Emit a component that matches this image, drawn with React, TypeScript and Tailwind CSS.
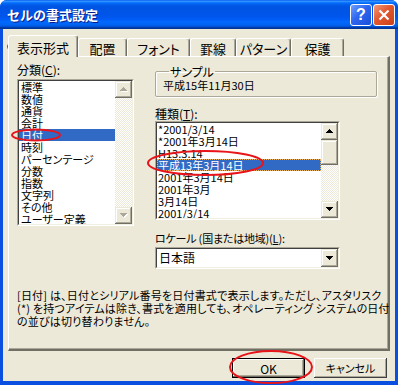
import React from "react";

const font = "font-['Noto_Sans_CJK_JP',sans-serif] [font-feature-settings:'palt']";
const raised =
  "bg-[#ece9d8] shadow-[inset_-1px_-1px_#716f64,inset_1px_1px_#ece9d8,inset_-2px_-2px_#aca899,inset_2px_2px_#fff]";
const checker =
  "bg-[repeating-conic-gradient(#fff_0%_25%,#ece9d8_0%_50%)] bg-[length:2px_2px]";

function Tri({ up, disabled }: { up?: boolean; disabled?: boolean }) {
  const rows = up
    ? [
        [3, 0, 1],
        [2, 1, 3],
        [1, 2, 5],
        [0, 3, 7],
      ]
    : [
        [0, 0, 7],
        [1, 1, 5],
        [2, 2, 3],
        [3, 3, 1],
      ];
  const c = disabled ? "#aca899" : "#000";
  return (
    <svg width="8" height="5" viewBox="0 0 8 5" shapeRendering="crispEdges">
      {disabled &&
        rows.map(([x, y, w], i) => (
          <rect key={"s" + i} x={x + 1} y={y + 1} width={w} height={1} fill="#fff" />
        ))}
      {rows.map(([x, y, w], i) => (
        <rect key={i} x={x} y={y} width={w} height={1} fill={c} />
      ))}
    </svg>
  );
}

function ScrollBar({ disabled, thumb }: { disabled?: boolean; thumb?: boolean }) {
  return (
    <div className="flex flex-col w-[17px] h-full shrink-0">
      <div className={`${raised} h-[17px] flex items-center justify-center`}>
        <Tri up disabled={disabled} />
      </div>
      {thumb && <div className={`${raised} h-[25px]`} />}
      <div className={`flex-1 ${checker}`} />
      <div className={`${raised} h-[17px] flex items-center justify-center`}>
        <Tri disabled={disabled} />
      </div>
    </div>
  );
}

function Sunken({ className, children }: { className?: string; children: React.ReactNode }) {
  return (
    <div
      className={`border border-t-[#aca899] border-l-[#aca899] border-b-white border-r-white ${className ?? ""}`}
    >
      <div className="h-full border border-t-[#404040] border-l-[#404040] border-b-[#f1efe2] border-r-[#f1efe2] bg-white flex">
        {children}
      </div>
    </div>
  );
}

const categories = [
  "標準",
  "数値",
  "通貨",
  "会計",
  "日付",
  "時刻",
  "パーセンテージ",
  "分数",
  "指数",
  "文字列",
  "その他",
  "ユーザー定義",
];

const types = [
  "*2001/3/14",
  "*2001年3月14日",
  "H13.3.14",
  "平成13年3月14日",
  "2001年3月14日",
  "2001年3月",
  "3月14日",
  "2001/3/14",
];

const tabs = [
  { label: "表示形式", w: "w-[70px]" },
  { label: "配置", w: "w-[49px]" },
  { label: "フォント", w: "w-[63px]" },
  { label: "罫線", w: "w-[46px]" },
  { label: "パターン", w: "w-[55px]" },
  { label: "保護", w: "w-[53px]" },
];

export default function App() {
  return (
    <div className={`${font} text-[11px] leading-[13px] text-black`}>
      <div className="relative w-[398px] h-[385px] rounded-t-[7px] overflow-hidden bg-[#0a4fe0] flex flex-col">
        {/* title bar */}
        <div className="h-[29px] shrink-0 flex items-center pl-[7px] pr-[3px] bg-[linear-gradient(to_bottom,#0058ee_0%,#3593ff_4%,#288eff_6%,#127dff_8%,#036ffc_10%,#0262ee_14%,#0057e5_20%,#0054e3_24%,#0055eb_56%,#005bf5_66%,#026afe_76%,#0062ef_86%,#0052d6_92%,#0040ab_94%,#003092_100%)]">
          <span className="text-white font-bold text-[13px] leading-[16px] [text-shadow:1px_1px_#0a1e8c] mt-[1px] [font-feature-settings:normal]">
            セルの書式設定
          </span>
          <div className="ml-auto flex gap-[1px] mt-[1px]">
            <div className="w-[22px] h-[22px] rounded-[3px] border border-white bg-[linear-gradient(135deg,#6fa0ff_0%,#2d66f0_45%,#1b4fd8_100%)] flex items-center justify-center text-white font-bold text-[16px] leading-[16px] font-['Liberation_Sans',sans-serif]">
              ?
            </div>
            <div className="w-[22px] h-[22px] rounded-[3px] border border-white bg-[linear-gradient(135deg,#f39a7a_0%,#e2582f_45%,#c8401c_100%)] flex items-center justify-center">
              <svg width="12" height="12" viewBox="0 0 12 12">
                <path d="M1.5 1.5 L10.5 10.5 M10.5 1.5 L1.5 10.5" stroke="#fff" strokeWidth="2.2" />
              </svg>
            </div>
          </div>
        </div>

        {/* body */}
        <div className="flex-1 mx-[3px] mb-[4px] bg-[#ece9d8] flex flex-col">
          {/* tabs */}
          <div className="mt-[6px] h-[21px] pl-[5px] flex items-end relative z-10">
            {tabs.map((t, i) =>
              i === 0 ? (
                <div
                  key={t.label}
                  className={`${t.w} h-[22px] -mb-[1px] bg-[#ece9d8] border-l border-t border-white border-r border-r-[#716f64] shadow-[inset_-1px_0_#aca899] rounded-t-[3px] pt-[5px] text-center text-[13px]`}
                >
                  {t.label}
                </div>
              ) : (
                <div
                  key={t.label}
                  className={`${t.w} h-[18px] bg-[#ece9d8] border-l border-t border-white border-r border-r-[#716f64] shadow-[inset_-1px_0_#aca899] rounded-t-[3px] pt-[3px] text-center text-[13px]`}
                >
                  {t.label}
                </div>
              )
            )}
          </div>

          {/* panel */}
          <div className="mx-[5px] h-[295px] shrink-0 border-l border-t border-white border-r-2 border-b-2 border-r-[#716f64] border-b-[#716f64] shadow-[inset_-1px_-1px_#aca899] pl-[8px] pt-[6px] flex flex-col">
            <div className="flex">
              {/* left column */}
              <div className="w-[117px] flex flex-col">
                <div className="text-[12px]">
                  分類(<span className="underline">C</span>):
                </div>
                <Sunken className="mt-[3px] h-[147px]">
                  <div className="flex-1 overflow-hidden">
                    {categories.map((c) => (
                      <div
                        key={c}
                        className={`h-[12px] leading-[12px] pl-[2px] whitespace-nowrap ${
                          c === "日付" ? "bg-[#316ac5] text-white" : ""
                        }`}
                      >
                        {c}
                      </div>
                    ))}
                  </div>
                  <ScrollBar disabled />
                </Sunken>
              </div>

              {/* right column */}
              <div className="ml-[21px] flex flex-col">
                <fieldset className="mt-[2px] w-[222px] h-[32px] border border-[#aca899] shadow-[inset_1px_1px_#fff,1px_1px_#fff] rounded-[2px] pl-[7px]">
                  <legend className="ml-[6px] px-[1px] leading-[13px] text-[12px]">サンプル</legend>
                  <div className="mt-[1px] leading-[13px]">平成15年11月30日</div>
                </fieldset>
                <div className="mt-[10px] text-[12px]">
                  種類(<span className="underline">T</span>):
                </div>
                <Sunken className="mt-[1px] w-[185px] h-[99px]">
                  <div className="flex-1 overflow-hidden">
                    {types.map((t) => (
                      <div
                        key={t}
                        className={`h-[12px] leading-[12px] pl-[1px] whitespace-nowrap ${
                          t === "平成13年3月14日"
                            ? "bg-[#316ac5] text-white outline outline-1 outline-dotted outline-[#e8b060] -outline-offset-1"
                            : ""
                        }`}
                      >
                        {t}
                      </div>
                    ))}
                  </div>
                  <ScrollBar thumb />
                </Sunken>
                <div className="mt-[12px] tracking-[-0.2px]">
                  ロケール (国または地域)(<span className="underline">L</span>):
                </div>
                <Sunken className="mt-[2px] w-[185px] h-[22px]">
                  <div className="flex-1 pl-[2px] leading-[18px] text-[12px]">日本語</div>
                  <div className={`${raised} w-[17px] h-full flex items-center justify-center`}>
                    <Tri />
                  </div>
                </Sunken>
              </div>
            </div>
            <div className="mt-[20px] leading-[13px] whitespace-nowrap tracking-[0.2px]">
              [日付] は、日付とシリアル番号を日付書式で表示します。ただし、アスタリスク
              <br />
              (*) を持つアイテムは除き、書式を適用しても、オペレーティング システムの日付
              <br />
              の並びは切り替わりません。
            </div>
          </div>

          {/* buttons */}
          <div className="mt-[7px] h-[20px] flex justify-end gap-[9px] pr-[8px]">
            <div className="w-[73px] h-[20px] border border-black">
              <div className="h-full bg-[#ece9d8] shadow-[inset_-1px_-1px_#716f64,inset_1px_1px_#fff,inset_-2px_-2px_#aca899] flex items-center justify-center text-[12px]">
                OK
              </div>
            </div>
            <div className="w-[73px] h-[20px] bg-[#ece9d8] shadow-[inset_-1px_-1px_#404040,inset_1px_1px_#fff,inset_-2px_-2px_#aca899] flex items-center justify-center">
              キャンセル
            </div>
          </div>
        </div>

        {/* red annotation ellipses */}
        <svg className="absolute left-0 top-0 pointer-events-none" width="398" height="385" viewBox="0 0 398 385">
          <g fill="none" stroke="#e8141a" strokeWidth="2">
            <ellipse cx="42" cy="46.5" rx="34" ry="8.5" />
            <ellipse cx="36" cy="135" rx="24" ry="5.5" />
            <ellipse cx="205.5" cy="163" rx="57.5" ry="12" />
            <ellipse cx="271" cy="367" rx="41" ry="16" />
          </g>
        </svg>
      </div>
    </div>
  );
}
